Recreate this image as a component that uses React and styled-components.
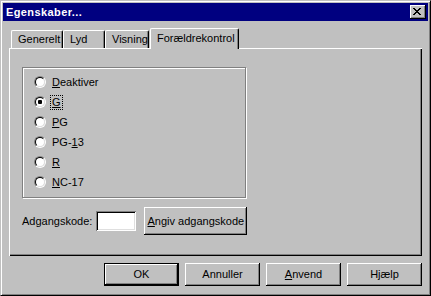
import React from 'react';
import styled, { createGlobalStyle } from 'styled-components';

const Global = createGlobalStyle`
  html, body { margin: 0; padding: 0; background: #c0c0c0; overflow: hidden; }
  * { box-sizing: border-box; }
`;

const Window = styled.div`
  width: 431px;
  height: 296px;
  background: #c0c0c0;
  border: 1px solid;
  border-color: #c0c0c0 #000 #000 #c0c0c0;
  box-shadow: inset 1px 1px #fff, inset -1px -1px #808080;
  padding: 2px;
  display: flex;
  flex-direction: column;
  font-family: "Liberation Sans", Arial, sans-serif;
  font-size: 11px;
  color: #000;
`;

const TitleBar = styled.div`
  height: 18px;
  flex: none;
  background: #000080;
  display: flex;
  align-items: center;
  justify-content: space-between;
  padding: 0 2px 0 3px;
`;

const Title = styled.span`
  color: #fff;
  font-weight: bold;
  font-size: 11px;
  letter-spacing: 0.4px;
  line-height: 13px;
`;

const CloseButton = styled.button`
  width: 16px;
  height: 14px;
  padding: 0 0 0 3px;
  border: none;
  background: #c0c0c0;
  box-shadow: inset -1px -1px #000, inset 1px 1px #fff, inset -2px -2px #808080;
  display: flex;
  align-items: flex-start;
  padding-top: 3px;
  svg { display: block; }
`;

const Body = styled.div`
  flex: 1;
  display: flex;
  flex-direction: column;
  padding: 7px 6px 0 6px;
`;

const TabRow = styled.div`
  position: relative;
  z-index: 1;
  height: 21px;
  margin-bottom: -1px;
  display: flex;
  align-items: flex-end;
  padding-left: 2px;
`;

const Tab = styled.div`
  width: ${p => p.$w}px;
  height: ${p => (p.$active ? 21 : 18)}px;
  margin-bottom: ${p => (p.$active ? 0 : 1)}px;
  margin-left: ${p => (p.$active ? 1 : 0)}px;
  padding: ${p => (p.$active ? 3 : 2)}px 0 0 6px;
  line-height: 13px;
  background: #c0c0c0;
  border-top: 1px solid #fff;
  border-left: 1px solid #fff;
  border-right: 1px solid #000;
  border-radius: 2px 2px 0 0;
  box-shadow: inset -1px 0 #808080;
  white-space: nowrap;
`;

const Panel = styled.div`
  height: 208px;
  flex: none;
  background: #c0c0c0;
  box-shadow: inset 1px 1px #fff, inset -1px -1px #000, inset -2px -2px #808080;
  padding: 19px 0 0 13px;
  display: flex;
  flex-direction: column;
`;

const GroupBox = styled.div`
  width: 224px;
  height: 131px;
  border: 1px solid #808080;
  box-shadow: inset 1px 1px #fff, 1px 1px #fff;
  padding: 4px 0 0 11px;
  display: flex;
  flex-direction: column;
`;

const RadioRow = styled.div`
  height: 20px;
  display: flex;
  align-items: center;
  gap: 4px;
`;

const RadioOuter = styled.span`
  width: 12px;
  height: 12px;
  border-radius: 50%;
  border: 1px solid;
  border-color: #808080 #fff #fff #808080;
  flex: none;
`;

const RadioInner = styled.span`
  display: flex;
  align-items: center;
  justify-content: center;
  width: 10px;
  height: 10px;
  border-radius: 50%;
  border: 1px solid;
  border-color: #000 #dfdfdf #dfdfdf #000;
  background: #fff;
`;

const Dot = styled.span`
  width: 4px;
  height: 4px;
  border-radius: 1px;
  background: #000;
`;

const RadioLabel = styled.span`
  padding: 0 1px;
  line-height: 13px;
  border: 1px ${p => (p.$focus ? 'dotted #000' : 'solid transparent')};
`;

const PasswordRow = styled.div`
  margin-top: 9px;
  display: flex;
  align-items: center;
`;

const Label = styled.span`
  margin-right: 4px;
  line-height: 13px;
`;

const Input = styled.input`
  width: 40px;
  height: 20px;
  border: none;
  background: #fff;
  margin: 0 8px 0 0;
  padding: 0;
  box-shadow: inset 1px 1px #808080, inset -1px -1px #fff, inset 2px 2px #000, inset -2px -2px #dfdfdf;
  outline: none;
`;

const Button = styled.button`
  width: ${p => p.$w || 75}px;
  height: ${p => p.$h || 23}px;
  border: none;
  padding: 0;
  background: #c0c0c0;
  font-family: "Liberation Sans", Arial, sans-serif;
  font-size: 11px;
  color: #000;
  line-height: 13px;
  box-shadow: ${p =>
    p.$default
      ? 'inset 0 0 0 1px #000, inset -2px -2px #000, inset 2px 2px #fff, inset -3px -3px #808080'
      : 'inset -1px -1px #000, inset 1px 1px #fff, inset -2px -2px #808080'};
`;

const ButtonRow = styled.div`
  margin-top: 7px;
  display: flex;
  justify-content: flex-end;
  gap: 6px;
`;

const CloseGlyph = () => (
  <svg width="8" height="7" viewBox="0 0 8 7" shapeRendering="crispEdges">
    {[
      [0, 0, 2], [6, 0, 2],
      [1, 1, 2], [5, 1, 2],
      [2, 2, 4],
      [3, 3, 2],
      [2, 4, 4],
      [1, 5, 2], [5, 5, 2],
      [0, 6, 2], [6, 6, 2],
    ].map(([x, y, w], i) => (
      <rect key={i} x={x} y={y} width={w} height={1} fill="#000" />
    ))}
  </svg>
);

const Radio = ({ checked, focus, children }) => (
  <RadioRow>
    <RadioOuter>
      <RadioInner>{checked && <Dot />}</RadioInner>
    </RadioOuter>
    <RadioLabel $focus={focus}>{children}</RadioLabel>
  </RadioRow>
);

export default function App() {
  return (
    <>
      <Global />
      <Window>
        <TitleBar>
          <Title>Egenskaber...</Title>
          <CloseButton aria-label="Luk">
            <CloseGlyph />
          </CloseButton>
        </TitleBar>
        <Body>
          <TabRow>
            <Tab $w={52}>Generelt</Tab>
            <Tab $w={42}>Lyd</Tab>
            <Tab $w={44}>Visning</Tab>
            <Tab $w={89} $active>Forældrekontrol</Tab>
          </TabRow>
          <Panel>
            <GroupBox>
              <Radio><u>D</u>eaktiver</Radio>
              <Radio checked focus><u>G</u></Radio>
              <Radio><u>P</u>G</Radio>
              <Radio>PG-<u>1</u>3</Radio>
              <Radio><u>R</u></Radio>
              <Radio><u>N</u>C-17</Radio>
            </GroupBox>
            <PasswordRow>
              <Label>Adgangskode:</Label>
              <Input type="text" />
              <Button $w={103} $h={28}><u>A</u>ngiv adgangskode</Button>
            </PasswordRow>
          </Panel>
          <ButtonRow>
            <Button $default>OK</Button>
            <Button>Annuller</Button>
            <Button><u>A</u>nvend</Button>
            <Button>Hjælp</Button>
          </ButtonRow>
        </Body>
      </Window>
    </>
  );
}
